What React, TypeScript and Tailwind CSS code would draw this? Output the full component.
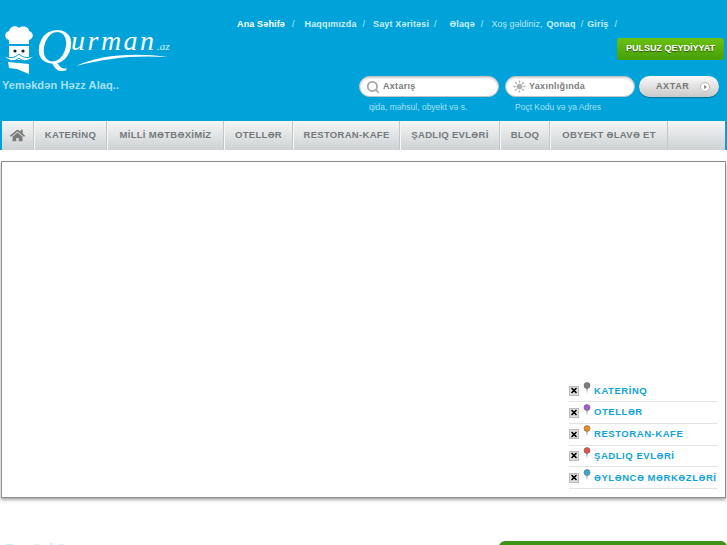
import { Search, Sun, X } from "lucide-react";
import { FaHome } from "react-icons/fa";

const topLinks = [
  { label: "Ana Səhifə", active: true, gap: "mr-[7px]", after: "mr-[10px]" },
  { label: "Haqqımızda", gap: "mr-[6px]", after: "mr-[8px]" },
  { label: "Sayt Xəritəsi", gap: "mr-[5px]", after: "mr-[13px]" },
  { label: "Əlaqə", gap: "mr-[6px]", after: "mr-[8px]" },
];

const navItems = [
  { label: "KATERİNQ", width: "w-[73px]" },
  { label: "MİLLİ MƏTBƏXİMİZ", width: "w-[117px]" },
  { label: "OTELLƏR", width: "w-[69px]" },
  { label: "RESTORAN-KAFE", width: "w-[107px]" },
  { label: "ŞADLIQ EVLƏRİ", width: "w-[100px]" },
  { label: "BLOQ", width: "w-[50px]" },
  { label: "OBYEKT ƏLAVƏ ET", width: "w-[118px]" },
];

const legend = [
  { label: "KATERİNQ", color: "#7d7d7d" },
  { label: "OTELLƏR", color: "#a05fd8" },
  { label: "RESTORAN-KAFE", color: "#ee8a1e" },
  { label: "ŞADLIQ EVLƏRİ", color: "#e0564f" },
  { label: "ƏYLƏNCƏ MƏRKƏZLƏRİ", color: "#35a9dc" },
];

const Logo = () => (
  <div className="flex items-start">
    <svg width="32" height="50" viewBox="0 0 32 50" className="mt-[24px] ml-[3px] shrink-0">
      <path d="M6 16C1 15 1 8 6 7C7 2 13 1 16 4C20 1 26 3 26 7C31 8 31 15 26 16V20H6Z" fill="#fff" />
      <path d="M6 22H26V36H6Z" fill="#fff" />
      <circle cx="12" cy="27" r="1.6" fill="#123" />
      <circle cx="20" cy="27" r="1.6" fill="#123" />
      <path d="M1 31C6 35 12 34 16 30C20 34 26 35 31 31C27 38 20 38 16 34C12 38 5 38 1 31Z" fill="#fff" stroke="#00a3d9" />
      <path d="M5 38L26 40L26 50L14 45L6 44Z" fill="#fff" />
    </svg>
    <div className="relative ml-[1px] mt-[24px] h-[50px] w-[134px]">
      <span className="absolute left-0 top-[-5px] font-['Liberation_Serif',serif] text-[50px] leading-[54px] text-white italic">Q</span>
      <span className="absolute left-[35px] top-[1px] font-['Liberation_Serif',serif] text-[28px] leading-[32px] tracking-[2.5px] text-white italic">urman</span>
      <span className="absolute left-[121px] top-[16px] font-['Liberation_Serif',serif] text-[11px] leading-[12px] text-[#d5f1fb] italic">.az</span>
      <svg width="92" height="14" viewBox="0 0 92 14" className="absolute left-[40px] top-[29px]">
        <path d="M0 13C22 2 58 -1 92 4C58 2 30 5 0 13Z" fill="#fff" />
      </svg>
    </div>
  </div>
);

const Pin = ({ color }: { color: string }) => (
  <svg width="8" height="12" viewBox="0 0 8 12" className="mb-[6px] shrink-0">
    <circle cx="4" cy="3.5" r="3" fill={color} stroke="#555" strokeWidth="0.5" />
    <path d="M3.5 6.5H4.5L4 11.5Z" fill="#666" />
  </svg>
);

export default function App() {
  return (
    <div className="h-[545px] w-[727px] overflow-hidden bg-white font-['Liberation_Sans',Arial,sans-serif]">
      <header className="h-[150px] bg-[#00a3d9]">
        <div className="flex h-[121px] justify-between">
          <div className="w-[200px]">
            <Logo />
            <p className="mt-[5px] ml-[2px] text-[11px] leading-[13px] font-bold tracking-[0.1px] text-[#a9e2f7]">
              Yeməkdən Həzz Alaq..
            </p>
          </div>

          <div className="flex w-[490px] flex-col items-end pr-[3px]">
            <div className="mt-[18px] flex h-[13px] w-[487px] items-center text-[9px] leading-[13px] text-[#b8e8f8]">
              {topLinks.map((link) => (
                <span key={link.label} className="flex">
                  <a className={`${link.gap} font-bold tracking-[0.15px] ${link.active ? "text-white" : "text-[#c9effb]"}`}>{link.label}</a>
                  <span className={link.after}>/</span>
                </span>
              ))}
              <span className="mr-[2px]">Xoş gəldiniz,</span>
              <b className="ml-[2px] mr-[5px] tracking-[0.15px] text-[#c9effb]">Qonaq</b>
              <span className="mr-[4px]">/</span>
              <b className="mr-[6px] tracking-[0.15px] text-[#c9effb]">Giriş</b>
              <span>/</span>
            </div>

            <a className="mt-[7px] flex h-[22px] w-[107px] items-center justify-center rounded-[3px] bg-gradient-to-b from-[#6cc012] to-[#459f08] text-[9px] font-bold text-white [text-shadow:0_1px_1px_rgba(0,0,0,0.5)]">
              PULSUZ QEYDİYYAT
            </a>

            <div className="mt-[16px] mr-[5px] flex w-[360px] gap-[6px]">
              <div className="w-[140px]">
                <div className="flex h-[21px] items-center gap-[3px] rounded-full border border-[#c4c4c4] bg-white pl-[6px] shadow-[inset_0_1px_2px_rgba(0,0,0,0.2)]">
                  <Search size={14} strokeWidth={3} className="shrink-0 text-[#a5a5a5]" />
                  <span className="text-[9px] font-bold tracking-[0.3px] text-[#7c7c7c]">Axtarış</span>
                </div>
                <p className="mt-[5px] pl-[10px] text-[8.5px] leading-[10px] text-[#a6e1f6]">qida, məhsul, obyekt və s.</p>
              </div>
              <div className="w-[130px]">
                <div className="flex h-[21px] items-center gap-[3px] rounded-full border border-[#c4c4c4] bg-white pl-[7px] shadow-[inset_0_1px_2px_rgba(0,0,0,0.2)]">
                  <Sun size={13} strokeWidth={2.5} fill="#b0b0b0" className="shrink-0 text-[#b0b0b0]" />
                  <span className="text-[9px] font-bold tracking-[0.3px] text-[#7c7c7c]">Yaxınlığında</span>
                </div>
                <p className="mt-[5px] pl-[10px] text-[8.5px] leading-[10px] text-[#a6e1f6]">Poçt Kodu və ya Adres</p>
              </div>
              <button className="-ml-[2px] flex h-[21px] w-[80px] items-center rounded-full bg-gradient-to-b from-[#fafafa] to-[#c9c9c9] pl-[17px] text-[9px] font-bold tracking-[0.6px] text-[#777] shadow-[0_1px_1px_rgba(0,0,0,0.3)]">
                AXTAR
                <span className="ml-[11px] flex h-[10px] w-[10px] items-center justify-center rounded-full border border-[#bbb] bg-white">
                  <span className="ml-[1px] border-y-[2.5px] border-l-[3px] border-y-transparent border-l-[#888]" />
                </span>
              </button>
            </div>
          </div>
        </div>

        <nav className="mx-[2px] flex h-[29px] bg-gradient-to-b from-[#f4f5f5] to-[#ced2d4]">
          <div className="flex w-[32px] items-center justify-center border-r border-[#c2c6c8]">
            <FaHome size={15} color="#7b7b7b" />
          </div>
          {navItems.map((item) => (
            <a
              key={item.label}
              className={`flex ${item.width} items-center justify-center border-r border-l border-r-[#c2c6c8] border-l-[#f5f6f6] text-[9.5px] font-bold tracking-[0.3px] text-[#757a7d]`}
            >
              {item.label}
            </a>
          ))}
        </nav>
      </header>

      <main className="mx-[1px] mt-[11px] flex h-[337px] w-[725px] items-end justify-end border border-[#8e8e8e] pr-[7px] pb-[8px] shadow-[0_2px_3px_rgba(0,0,0,0.35)]">
        <ul className="w-[149px]">
          {legend.map((row) => (
            <li key={row.label} className="flex h-[21.7px] items-center gap-[4px] border-b border-[#e4e4e4]">
              <span className="flex h-[10px] w-[10px] shrink-0 items-center justify-center border border-[#bbb] bg-[#ddd]">
                <X size={9} strokeWidth={5} className="text-black" />
              </span>
              <Pin color={row.color} />
              <span className="-ml-[1px] whitespace-nowrap text-[9.5px] font-bold tracking-[0.55px] text-[#12a2d6]">{row.label}</span>
            </li>
          ))}
        </ul>
      </main>

      <section className="mt-[43px] flex items-start justify-between">
        <h2 className="ml-[5px] text-[14px] leading-[16px] font-bold text-[#c9eef9]">Bugünkü</h2>
        <div className="h-[30px] w-[228px] rounded-t-[6px] bg-[#3f9314]" />
      </section>
    </div>
  );
}
